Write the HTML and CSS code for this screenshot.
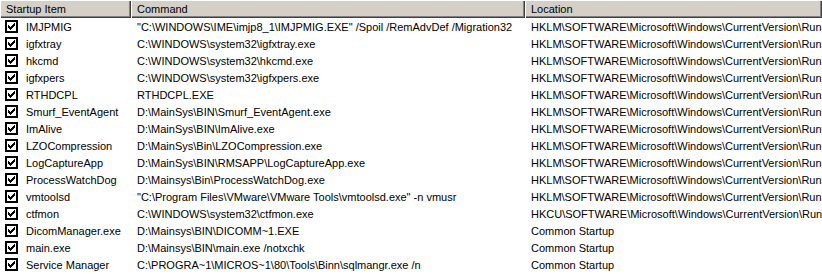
FILE: index.html
```html
<!DOCTYPE html>
<html lang="en">
<head>
    <meta charset="UTF-8">
    <title>Startup</title>
    <link rel="stylesheet" href="styles.css">
</head>
<body>
    <div class="list">
        <div class="header">
            <div class="col-head">Startup Item</div>
            <div class="col-head">Command</div>
            <div class="col-head">Location</div>
        </div>
        <div id="rows"></div>
    </div>

    <script>
        const items = [
            ['IMJPMIG', '"C:\\WINDOWS\\IME\\imjp8_1\\IMJPMIG.EXE" /Spoil /RemAdvDef /Migration32', 'HKLM\\SOFTWARE\\Microsoft\\Windows\\CurrentVersion\\Run'],
            ['igfxtray', 'C:\\WINDOWS\\system32\\igfxtray.exe', 'HKLM\\SOFTWARE\\Microsoft\\Windows\\CurrentVersion\\Run'],
            ['hkcmd', 'C:\\WINDOWS\\system32\\hkcmd.exe', 'HKLM\\SOFTWARE\\Microsoft\\Windows\\CurrentVersion\\Run'],
            ['igfxpers', 'C:\\WINDOWS\\system32\\igfxpers.exe', 'HKLM\\SOFTWARE\\Microsoft\\Windows\\CurrentVersion\\Run'],
            ['RTHDCPL', 'RTHDCPL.EXE', 'HKLM\\SOFTWARE\\Microsoft\\Windows\\CurrentVersion\\Run'],
            ['Smurf_EventAgent', 'D:\\MainSys\\BIN\\Smurf_EventAgent.exe', 'HKLM\\SOFTWARE\\Microsoft\\Windows\\CurrentVersion\\Run'],
            ['ImAlive', 'D:\\MainSys\\BIN\\ImAlive.exe', 'HKLM\\SOFTWARE\\Microsoft\\Windows\\CurrentVersion\\Run'],
            ['LZOCompression', 'D:\\MainSys\\Bin\\LZOCompression.exe', 'HKLM\\SOFTWARE\\Microsoft\\Windows\\CurrentVersion\\Run'],
            ['LogCaptureApp', 'D:\\MainSys\\BIN\\RMSAPP\\LogCaptureApp.exe', 'HKLM\\SOFTWARE\\Microsoft\\Windows\\CurrentVersion\\Run'],
            ['ProcessWatchDog', 'D:\\Mainsys\\Bin\\ProcessWatchDog.exe', 'HKLM\\SOFTWARE\\Microsoft\\Windows\\CurrentVersion\\Run'],
            ['vmtoolsd', '"C:\\Program Files\\VMware\\VMware Tools\\vmtoolsd.exe" -n vmusr', 'HKLM\\SOFTWARE\\Microsoft\\Windows\\CurrentVersion\\Run'],
            ['ctfmon', 'C:\\WINDOWS\\system32\\ctfmon.exe', 'HKCU\\SOFTWARE\\Microsoft\\Windows\\CurrentVersion\\Run'],
            ['DicomManager.exe', 'D:\\Mainsys\\BIN\\DICOMM~1.EXE', 'Common Startup'],
            ['main.exe', 'D:\\Mainsys\\BIN\\main.exe /notxchk', 'Common Startup'],
            ['Service Manager', 'C:\\PROGRA~1\\MICROS~1\\80\\Tools\\Binn\\sqlmangr.exe /n', 'Common Startup']
        ];

        const checkSvg = '<svg class="check" width="13" height="13" viewBox="0 0 13 13">' +
            '<rect x="0" y="0" width="13" height="13" fill="#000"/>' +
            '<rect x="2" y="2" width="9" height="9" fill="#fff"/>' +
            '<path d="M3 5h1v1h1v1h1V6h1V5h1V4h1V3h1v3H9v1H8v1H7v1H6v1H5V9H4V8H3z" fill="#000"/>' +
            '</svg>';

        const rows = document.getElementById('rows');
        items.forEach(item => {
            const row = document.createElement('div');
            row.classList.add('row');

            const name = document.createElement('div');
            name.classList.add('cell', 'cell-name');
            name.innerHTML = checkSvg;
            const label = document.createElement('span');
            label.textContent = item[0];
            name.appendChild(label);

            const command = document.createElement('div');
            command.classList.add('cell');
            command.textContent = item[1];

            const location = document.createElement('div');
            location.classList.add('cell');
            location.textContent = item[2];

            row.appendChild(name);
            row.appendChild(command);
            row.appendChild(location);
            rows.appendChild(row);
        });
    </script>
</body>
</html>
```

FILE: styles.css
```css
body {
    margin: 0;
    background-color: #fff;
    font-family: "Liberation Sans", Arial, sans-serif;
    font-size: 11px;
    color: #000;
}

.list {
    width: 822px;
    height: 274px;
    overflow: hidden;
}

.header,
.row {
    display: grid;
    grid-template-columns: 131px 394px 1fr;
}

.col-head {
    height: 18px;
    line-height: 18px;
    padding-left: 6px;
    background-color: #d4d0c8;
    box-shadow: inset 1px 1px #fff, inset -1px -1px #404040, inset -2px -2px #808080;
    white-space: nowrap;
}

.row {
    height: 17px;
}

.cell {
    line-height: 17px;
    padding-top: 1px;
    padding-left: 6px;
    white-space: nowrap;
    overflow: hidden;
}

.cell-name {
    display: flex;
    align-items: center;
    padding-top: 0;
    padding-left: 5px;
}

.cell-name span {
    padding-top: 1px;
}

.check {
    flex: none;
    margin-right: 8px;
    shape-rendering: crispEdges;
}
```
